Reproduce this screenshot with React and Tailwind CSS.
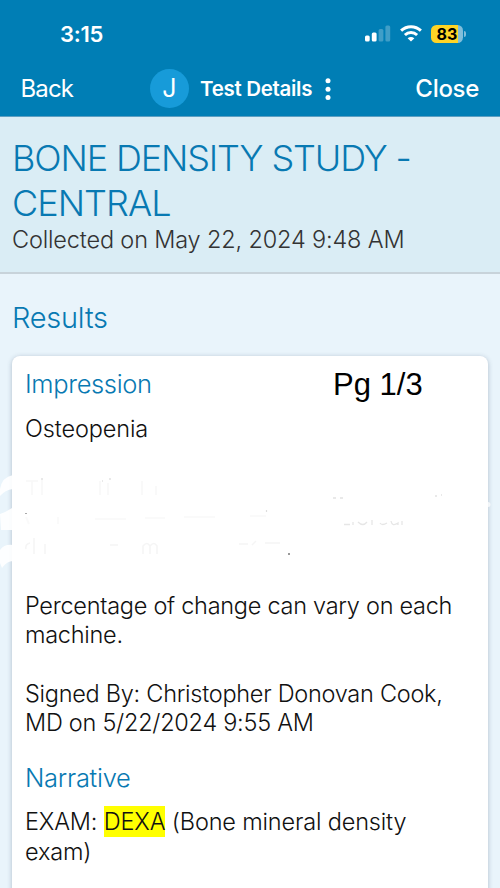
import React from 'react';

function StatusBar() {
  return (
    <div className="flex h-[67px] items-center pl-[60px] pr-[34px] text-white">
      <span className="text-[22px] font-semibold leading-none tracking-[-0.3px]">3:15</span>
      <svg className="ml-auto" width="26" height="17" viewBox="0 0 26 17" fill="#fff">
        <rect x="0" y="10.5" width="4.7" height="6" rx="1.5" />
        <rect x="6.8" y="7.5" width="4.8" height="9" rx="1.5" />
        <rect x="13.6" y="4" width="4.8" height="12.5" rx="1.5" opacity=".25" />
        <rect x="20.4" y="0.5" width="4.8" height="16" rx="1.5" opacity=".25" />
      </svg>
      <svg className="ml-[9px]" width="22" height="17" viewBox="0 0 22 17" fill="none" stroke="#fff" strokeWidth="3">
        <path d="M1.1 5.7C6.8.5 15.200.5 20.900 5.7" />
        <path d="M4.900 10C8.400 6.700 13.600 6.700 17.100 10" />
        <path d="M11 16.500L7.600 13.300Q11 10.600 14.400 13.300Z" fill="#fff" stroke="none" />
      </svg>
      <div className="ml-[9px] flex h-[18px] w-[32px] items-center justify-center overflow-hidden rounded-[5.5px] bg-[linear-gradient(to_right,#ffd426_27px,#80bedb_27px)]">
        <span className="text-[16px] font-bold leading-none tracking-[0.1px] text-black">83</span>
      </div>
      <div className="ml-[1px] h-[6px] w-[2px] rounded-r-full bg-[#80bedb]" />
    </div>
  );
}

function NavBar() {
  return (
    <div className="flex h-[43px] items-center pl-[20.500px] pr-[21px] text-white">
      <span className="w-[129.500px] text-[24px] leading-none tracking-[-0.9px]">Back</span>
      <div className="flex h-[39px] w-[39px] items-center justify-center rounded-full bg-[#179bd9] text-[25px] leading-none">J</div>
      <span className="ml-[11px] w-[114px] whitespace-nowrap pt-[1px] text-[20.5px] font-semibold leading-none tracking-[-0.3px]">Test Details</span>
      <svg className="ml-[11px]" width="6" height="22" viewBox="0 0 6 22" fill="#fff">
        <circle cx="3" cy="2.700" r="2.500" />
        <circle cx="3" cy="11.200" r="2.500" />
        <circle cx="3" cy="19.500" r="2.500" />
      </svg>
      <span className="ml-auto text-[24px] font-medium leading-none tracking-[-0.3px]">Close</span>
    </div>
  );
}

function ErasedMarks() {
  return (
    <svg className="-ml-[25px] mt-[27px] block overflow-visible" width="500" height="96" viewBox="0 470 500 96" fill="none">
      <path d="M0 488Q2 476 13 474V488Q5 489 0 495ZM0 513Q6 511 12 507V529H1ZM0 549Q4 543 13 544V560Q7 560 2 567L0 562Z" fill="#fff" opacity=".9" />
      <circle cx="488" cy="503.500" r="2.500" fill="#fff" opacity=".7" />
      <path d="M26 480H38M32 480V494M42 479V494M100 480V494M108 482V494M142 480V494M156 485V494" stroke="#f8f8f8" strokeWidth="1.500" />
      <path d="M26 516L29 523M58 516V523M95 518H126M145 517H165M184 516H215M250 515H266" stroke="#fafafa" strokeWidth="2" />
      <path d="M26 548Q25 543 30 542M34 537V553M45 543V553M110 544H118M143 553V545Q147 540 150 545V553M150 545Q154 540 157 545V553M239 543H248M252 544L256 540M265 542H280" stroke="#f5f5f5" strokeWidth="1.500" />
      <path d="M25 512.500H27" stroke="#aaa" strokeWidth="1.200" />
      <path d="M266.500 509V511" stroke="#ddd" strokeWidth="1.200" />
      <path d="M41 478H43M102 480H103M109 478H111M333 497H336M340 497H343M435 495H437M441 494H442" stroke="#e2e2e2" strokeWidth="1.300" />
      <path d="M344 523.500H350M353 524V521M358 521Q363 526 367 521M372 519V524M380 522Q382 525 387 522M391 520Q392 526 398 522V524M402 520V524" stroke="#e6e6e6" strokeWidth="1.300" />
      <path d="M288 553H290" stroke="#999" strokeWidth="2" />
    </svg>
  );
}

export default function App() {
  return (
    <div className="flex h-[888px] w-[500px] flex-col overflow-hidden bg-[#e9f4fb] font-[Inter,'Liberation_Sans',sans-serif]">
      <header className="h-[117px] shrink-0 border-b border-[#5c9fc2] bg-[#007eb5]">
        <StatusBar />
        <NavBar />
      </header>
      <section className="h-[157px] shrink-0 border-b-2 border-[#c8d3da] bg-[#daedf5] pl-3 pt-[19px]">
        <h1 className="whitespace-nowrap text-[36px] font-[350] leading-[45px] text-[#0879b2]">
          <span className="block tracking-[-1.13px]">BONE DENSITY STUDY -</span>
          <span className="block tracking-[-0.95px]">CENTRAL</span>
        </h1>
        <p className="whitespace-nowrap text-[23.500px] font-[350] leading-[28px] tracking-[-0.16px] text-[#333]">Collected on May 22, 2024 9:48 AM</p>
      </section>
      <main className="px-3">
        <h2 className="mt-[25px] h-[57px] text-[29px] font-[350] leading-[37px] tracking-[-0.25px] text-[#0879b2]">Results</h2>
        <div className="h-[560px] w-[476px] rounded-[8px] bg-white px-[13px] pt-[11px] text-[23.500px] font-[350] leading-[29.500px] tracking-[-0.27px] text-[#111] shadow-[0_1px_5px_rgba(40,60,90,0.3)]">
          <div className="flex h-[34px] items-center">
            <h3 className="w-[308px] text-[25.500px] tracking-[-0.35px] text-[#0879b2]">Impression</h3>
            <span className="whitespace-nowrap pt-[2px] font-['Liberation_Sans',sans-serif] text-[31px] font-normal leading-[34px] tracking-normal text-black">Pg 1/3</span>
          </div>
          <p className="mt-[13px] tracking-[-0.12px]">Osteopenia</p>
          <ErasedMarks />
          <p className="mt-[24px] whitespace-nowrap">Percentage of change can vary on each<br />machine.</p>
          <p className="mt-[29px] whitespace-nowrap">Signed By: Christopher Donovan Cook,<br />MD on 5/22/2024 9:55 AM</p>
          <h3 className="mt-[25.500px] text-[25.500px] leading-[30px] text-[#0879b2]">Narrative</h3>
          <p className="mt-[14px] whitespace-nowrap tracking-[-0.17px]">EXAM: <mark className="bg-[#ffff00] py-[1px] text-[#111]">DEXA</mark> (Bone mineral density<br />exam)</p>
        </div>
      </main>
    </div>
  );
}
